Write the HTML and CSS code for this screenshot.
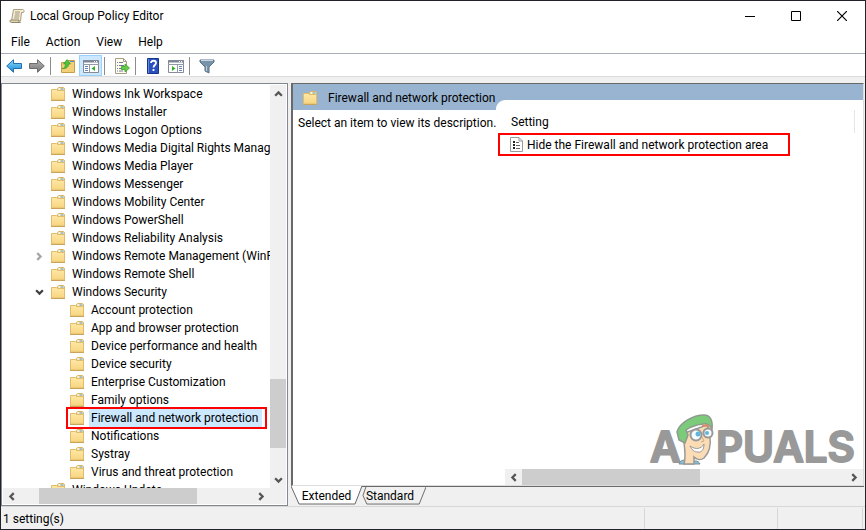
FILE: index.html
```
<!DOCTYPE html>
<html lang="en">
<head>
    <meta charset="UTF-8">
    <meta name="viewport" content="width=device-width, initial-scale=1.0">
    <title>Local Group Policy Editor</title>
    <link rel="stylesheet" href="styles.css">
</head>
<body>
    <!-- Shared icons -->
    <svg class="sprite" aria-hidden="true">
        <defs>
            <linearGradient id="folder-fill" x1="0" y1="0" x2="0" y2="1">
                <stop offset="0" stop-color="#ffe8a6"/>
                <stop offset="1" stop-color="#f6d580"/>
            </linearGradient>
            <linearGradient id="blue-fill" x1="0" y1="0" x2="0" y2="1">
                <stop offset="0" stop-color="#8bdcf8"/>
                <stop offset="1" stop-color="#1188d8"/>
            </linearGradient>
            <linearGradient id="grey-fill" x1="0" y1="0" x2="0" y2="1">
                <stop offset="0" stop-color="#b5b5b5"/>
                <stop offset="1" stop-color="#757575"/>
            </linearGradient>
        </defs>
        <symbol id="folder" viewBox="0 0 14 14">
            <path d="M6.500 5V1.500L7.500.5h5l1 1V5z" fill="#f7e3ad" stroke="#d9b566"/>
            <path d="M8 2h1.500" stroke="#fff"/>
            <path d="M9.500 2h3" stroke="#5aa0da"/>
            <path d="M.5 2.500h5l1 1h7v9.500H.5z" fill="url(#folder-fill)" stroke="#e0bd6c"/>
            <path d="M0 13.500h14" stroke="#c9a55c"/>
        </symbol>
        <symbol id="arrow-left" viewBox="0 0 8 8">
            <path d="M6 1L3 4l3 3" fill="none" stroke="currentColor" stroke-width="2"/>
        </symbol>
        <symbol id="arrow-right" viewBox="0 0 8 8">
            <path d="M2 1l3 3-3 3" fill="none" stroke="currentColor" stroke-width="2"/>
        </symbol>
        <symbol id="arrow-up" viewBox="0 0 8 8">
            <path d="M1 6l3-3 3 3" fill="none" stroke="currentColor" stroke-width="2"/>
        </symbol>
        <symbol id="arrow-down" viewBox="0 0 8 8">
            <path d="M1 2l3 3 3-3" fill="none" stroke="currentColor" stroke-width="2"/>
        </symbol>
    </svg>

    <div class="window">
        <!-- Title bar -->
        <header class="title-bar">
            <svg class="app-icon" viewBox="0 0 16 16">
                <path d="M4.500 1.500h9c2 0 2 3 .5 3h-1.500l-1 8.500H2.500z" fill="#f6ecd0" stroke="#a69c80"/>
                <path d="M1.500 12h8.500c-.5 1.500 0 2.500 1.500 2.500h-9c-1.500 0-2-1.500-1-2.500z" fill="#e2d4ac" stroke="#8f866c"/>
                <path d="M6 4h5M6 6h4.500M5.500 8h5M5 10h5" stroke="#9c9480"/>
            </svg>
            <h1>Local Group Policy Editor</h1>
            <div class="window-buttons">
                <button aria-label="Minimize"><svg viewBox="0 0 10 10"><path d="M0 5.500h10" stroke="#000"/></svg></button>
                <button aria-label="Maximize"><svg viewBox="0 0 10 10"><path d="M.5.5h9v9h-9z" fill="none" stroke="#000"/></svg></button>
                <button aria-label="Close"><svg viewBox="0 0 10 10"><path d="M0 0l10 10M10 0L0 10" stroke="#000" stroke-width="1.200"/></svg></button>
            </div>
        </header>

        <!-- Menu -->
        <nav class="menu-bar">
            <button>File</button>
            <button>Action</button>
            <button>View</button>
            <button>Help</button>
        </nav>

        <!-- Toolbar -->
        <div class="toolbar">
            <button aria-label="Back"><svg viewBox="0 0 16 16"><path d="M.7 8L7.500 1.700v3.800h8v5h-8v3.800z" fill="url(#blue-fill)" stroke="#236fae"/></svg></button>
            <button aria-label="Forward"><svg viewBox="0 0 16 16"><path d="M15.300 8L8.500 1.700v3.800h-8v5h8v3.800z" fill="url(#grey-fill)" stroke="#6d6d6d"/></svg></button>
            <span class="separator"></span>
            <button aria-label="Up one level"><svg viewBox="0 0 16 16">
                <path d="M1.500 4.500h5l1.500-2h6.500v12h-13z" fill="#f3cf78" stroke="#c79d48"/>
                <path d="M10 3.500h4" stroke="#4b91cc"/>
                <path d="M2 10.500c2.500 0 3.500-2 3.500-4.500H3.500L7 1.500 10.500 6h-2c0 3-2 5-6.500 4.500z" fill="#4cc43a" stroke="#278e23" stroke-width=".6"/>
            </svg></button>
            <button class="active" aria-label="Show/Hide Console Tree"><svg viewBox="0 0 16 16">
                <path d="M.5 2.500h15v12H.5z" fill="#fff" stroke="#858b96"/>
                <path d="M0 3.500h16" stroke="#7d8796" stroke-width="2"/>
                <path d="M0 6.500h16M6.500 7v8" stroke="#959ba5"/>
                <path d="M2 8.500h3M2 10.500h3M2 12.500h3" stroke="#6686ad"/>
                <path d="M12 8v5L8.500 10.500z" fill="#35ad26"/>
                <path d="M11 3.500h1M13 3.500h1" stroke="#fff"/>
            </svg></button>
            <span class="separator"></span>
            <button aria-label="Export List"><svg viewBox="0 0 16 16">
                <path d="M1.500.5h8l3 3v12h-11z" fill="#fffdf2" stroke="#a69e85"/>
                <path d="M9.500.5v3h3" fill="none" stroke="#a69e85"/>
                <path d="M3 4.500h1M5 4.500h4M3 7.500h1M5 7.500h5M3 10.500h1M5 10.500h3M3 13h1M5 13h4" stroke="#6f7896"/>
                <path d="M7.500 8.500h3.500V6l4.500 4-4.500 4v-2.500H7.500z" fill="#65cc46" stroke="#3b9d2c" stroke-width=".8"/>
            </svg></button>
            <span class="separator"></span>
            <button aria-label="Help"><svg viewBox="0 0 16 16">
                <path d="M2.500.5h11v15h-11z" fill="#2950bd" stroke="#18358c"/>
                <path d="M3.500 1v14" stroke="#6688df"/>
                <path d="M6 5c0-3 5-3 5 0 0 2-2.500 2-2.500 4.500M8.500 11v2" fill="none" stroke="#fff" stroke-width="1.800"/>
            </svg></button>
            <button aria-label="Show/Hide Action Pane"><svg viewBox="0 0 16 16">
                <path d="M.5 2.500h15v12H.5z" fill="#fff" stroke="#858b96"/>
                <path d="M0 3.500h16" stroke="#7d8796" stroke-width="2"/>
                <path d="M0 6.500h16M9.500 7v8" stroke="#959ba5"/>
                <path d="M11 8.500h3M11 10.500h3M11 12.500h3" stroke="#6686ad"/>
                <path d="M4 8v5l3.500-2.500z" fill="#35ad26"/>
                <path d="M11 3.500h1M13 3.500h1" stroke="#fff"/>
            </svg></button>
            <span class="separator"></span>
            <button aria-label="Filter"><svg viewBox="0 0 16 16">
                <path d="M1 2h14v2L10 9v6l-4-2V9L1 4z" fill="#7893a8" stroke="#58718a"/>
                <path d="M2 2.500h12" stroke="#c9d9e3"/>
                <path d="M7.500 8v5" stroke="#bdd0dc"/>
            </svg></button>
        </div>

        <main class="panes">
            <!-- Console tree -->
            <section class="tree-pane">
                <div class="tree-row">
                    <ul class="tree">
                        <li><svg class="folder"><use href="#folder"/></svg><span>Windows Ink Workspace</span></li>
                        <li><svg class="folder"><use href="#folder"/></svg><span>Windows Installer</span></li>
                        <li><svg class="folder"><use href="#folder"/></svg><span>Windows Logon Options</span></li>
                        <li><svg class="folder"><use href="#folder"/></svg><span>Windows Media Digital Rights Management</span></li>
                        <li><svg class="folder"><use href="#folder"/></svg><span>Windows Media Player</span></li>
                        <li><svg class="folder"><use href="#folder"/></svg><span>Windows Messenger</span></li>
                        <li><svg class="folder"><use href="#folder"/></svg><span>Windows Mobility Center</span></li>
                        <li><svg class="folder"><use href="#folder"/></svg><span>Windows PowerShell</span></li>
                        <li><svg class="folder"><use href="#folder"/></svg><span>Windows Reliability Analysis</span></li>
                        <li class="parent"><button class="closed" aria-label="Expand"><svg><use href="#arrow-right"/></svg></button><svg class="folder"><use href="#folder"/></svg><span>Windows Remote Management (WinRM)</span></li>
                        <li><svg class="folder"><use href="#folder"/></svg><span>Windows Remote Shell</span></li>
                        <li class="parent"><button aria-label="Collapse"><svg><use href="#arrow-down"/></svg></button><svg class="folder"><use href="#folder"/></svg><span>Windows Security</span></li>
                        <li class="child"><svg class="folder"><use href="#folder"/></svg><span>Account protection</span></li>
                        <li class="child"><svg class="folder"><use href="#folder"/></svg><span>App and browser protection</span></li>
                        <li class="child"><svg class="folder"><use href="#folder"/></svg><span>Device performance and health</span></li>
                        <li class="child"><svg class="folder"><use href="#folder"/></svg><span>Device security</span></li>
                        <li class="child"><svg class="folder"><use href="#folder"/></svg><span>Enterprise Customization</span></li>
                        <li class="child"><svg class="folder"><use href="#folder"/></svg><span>Family options</span></li>
                        <li class="child selected"><svg class="folder"><use href="#folder"/></svg><span>Firewall and network protection</span></li>
                        <li class="child"><svg class="folder"><use href="#folder"/></svg><span>Notifications</span></li>
                        <li class="child"><svg class="folder"><use href="#folder"/></svg><span>Systray</span></li>
                        <li class="child"><svg class="folder"><use href="#folder"/></svg><span>Virus and threat protection</span></li>
                        <li><svg class="folder"><use href="#folder"/></svg><span>Windows Update</span></li>
                    </ul>
                    <div class="scrollbar vertical">
                        <button aria-label="Scroll up"><svg><use href="#arrow-up"/></svg></button>
                        <div class="track tree-v"><div class="thumb"></div></div>
                        <button aria-label="Scroll down"><svg><use href="#arrow-down"/></svg></button>
                    </div>
                </div>
                <div class="scrollbar horizontal tree-scroll">
                    <button aria-label="Scroll left"><svg><use href="#arrow-left"/></svg></button>
                    <div class="track tree-h"><div class="thumb"></div></div>
                    <button aria-label="Scroll right"><svg><use href="#arrow-right"/></svg></button>
                </div>
            </section>

            <!-- Settings -->
            <section class="detail-pane">
                <div class="detail-view">
                    <div class="detail-title">
                        <svg class="folder"><use href="#folder"/></svg>
                        <h2>Firewall and network protection</h2>
                    </div>
                    <div class="detail-body">
                        <p class="description">Select an item to view its description.</p>
                        <div class="list">
                            <table>
                                <thead><tr><th>Setting</th></tr></thead>
                                <tbody>
                                    <tr><td><div class="setting">
                                        <svg viewBox="0 0 13 15">
                                            <path d="M.5.5h8.500l3.500 3.500v10.500H.5z" fill="#fff" stroke="#9a9a9a"/>
                                            <path d="M9 .5V4h3.500" fill="none" stroke="#9a9a9a"/>
                                            <path d="M3 5h2M3 8h2M3 11h2" stroke="#222" stroke-width="2"/>
                                            <path d="M6 5.500h3M6 8.500h4M6 11.500h4" stroke="#666"/>
                                        </svg>
                                        <span>Hide the Firewall and network protection area</span>
                                    </div></td></tr>
                                </tbody>
                            </table>
                            <div class="scrollbar horizontal">
                                <button aria-label="Scroll left"><svg><use href="#arrow-left"/></svg></button>
                                <div class="track list-h"><div class="thumb"></div></div>
                                <button aria-label="Scroll right"><svg><use href="#arrow-right"/></svg></button>
                            </div>
                        </div>
                    </div>
                    <svg class="watermark" viewBox="0 0 210 52" role="img" aria-label="Appuals">
                        <g class="letters">
                            <text x="1" y="49">A</text>
                            <text x="67" y="49">PUALS</text>
                        </g>
                        <path d="M30 51c1-3 3-4 6-4l10 1c3 0 4 1 5 3z" fill="#79c7e4" stroke="#888"/>
                        <path d="M35 30l-2-9 25-9 3 12c1 8-1 16-6 21-4 3-8 1-10-1v7h-10c2-7 1-14 0-21z" fill="#fbdcb4" stroke="#999" stroke-width="1.500"/>
                        <path d="M28 19c2-9 16-17 27-17 6 0 9 5 8 14-2-4-5-6-9-5-8 1-13 3-17 6l2 5-3 8-6-3z" fill="#7ccb7b" stroke="#8f9a8f" stroke-width="1.500"/>
                        <path d="M53 13l5-1 2 3" fill="none" stroke="#d88b62" stroke-width="2"/>
                        <circle cx="47" cy="22" r="5.500" fill="#f5fcff" stroke="#999" stroke-width="2"/>
                        <circle cx="59" cy="20" r="4.500" fill="#f5fcff" stroke="#999" stroke-width="2"/>
                        <circle cx="49" cy="21" r="2.500" fill="#62b5da"/>
                        <circle cx="58" cy="20" r="2" fill="#62b5da"/>
                        <path d="M41 33c6 4 11 3 14-2 0 6-3 9-6 8-4 0-6-2-8-6z" fill="#fff" stroke="#999"/>
                        <path d="M53 24l2 4-3 1" fill="none" stroke="#c6a988"/>
                    </svg>
                </div>
                <div class="tabs">
                    <button class="tab current"><svg viewBox="0 0 71 19" preserveAspectRatio="none"><path d="M0 0l8 18h56l7-18" fill="#fff" stroke="#696969"/></svg><span>Extended</span></button>
                    <button class="tab"><svg viewBox="0 0 66 19" preserveAspectRatio="none"><path d="M4 0L1 9l4 9h54l7-18" fill="#f0f0f0" stroke="#696969"/></svg><span>Standard</span></button>
                    <div class="tab-line"></div>
                </div>
            </section>
        </main>

        <!-- Status bar -->
        <footer class="status-bar">
            <div class="status-text">1 setting(s)</div>
            <div class="status-cell wide"></div>
            <div class="status-cell"></div>
        </footer>
    </div>
</body>
</html>
```
FILE: styles.css
```
* {
    margin: 0;
    padding: 0;
    box-sizing: border-box;
}

body {
    background: #f0f0f0;
    color: #000;
    font-family: Roboto, "Open Sans", sans-serif;
    font-size: 12px;
    line-height: 18px;
}

button {
    border: none;
    background: none;
    color: inherit;
    font: inherit;
}

svg {
    display: block;
    flex: none;
}

.sprite {
    position: absolute;
    width: 0;
    height: 0;
}

.window {
    display: flex;
    flex-direction: column;
    height: 100vh;
    border: 1px solid #22222c;
    background: #f0f0f0;
}

/* Title bar */
.title-bar {
    display: flex;
    align-items: center;
    height: 30px;
    padding-left: 8px;
    background: #fff;
}

.app-icon {
    width: 16px;
    height: 16px;
    margin-right: 5px;
}

.title-bar h1 {
    flex: 1;
    font-size: 12px;
    font-weight: normal;
}

.window-buttons {
    display: flex;
}

.window-buttons button {
    display: flex;
    align-items: center;
    justify-content: center;
    width: 46px;
    height: 29px;
}

.window-buttons svg {
    width: 10px;
    height: 10px;
}

/* Menu and toolbar */
.menu-bar {
    display: flex;
    height: 23px;
    padding: 0 2px;
    border-bottom: 1px solid #a9adb8;
    background: #fff;
}

.menu-bar button {
    padding: 0 8px;
}

.toolbar {
    display: flex;
    align-items: flex-end;
    height: 23px;
    padding-left: 1px;
    border-bottom: 1px solid #dcdcdc;
    background: #fff;
}

.toolbar button {
    display: flex;
    align-items: center;
    justify-content: center;
    width: 23px;
    height: 21px;
}

.toolbar svg {
    width: 16px;
    height: 16px;
}

.toolbar .active {
    border: 1px solid #99d1ff;
    background: #cce8ff;
}

.separator {
    width: 1px;
    height: 18px;
    margin: 0 5px 1px 2px;
    background: #8c8c8c;
}

/* Panes */
.panes {
    display: flex;
    flex: 1;
    gap: 3px;
    min-height: 0;
    padding: 6px 1px 0 0;
}

.tree-pane {
    display: flex;
    flex-direction: column;
    flex: 0 0 287px;
    min-width: 0;
    padding: 1px;
    border: 1px solid #828790;
    background: #fff;
}

.tree-row {
    display: flex;
    flex: 1;
    min-height: 0;
}

.tree {
    flex: 1;
    min-width: 0;
    overflow: hidden;
    list-style: none;
}

.tree li {
    display: flex;
    align-items: center;
    height: 18px;
    padding-left: 48px;
    white-space: nowrap;
}

.tree .child {
    padding-left: 67px;
}

.tree .parent {
    padding-left: 32px;
}

.tree li span {
    padding: 0 4px 0 2px;
}

.tree button {
    flex: none;
    width: 16px;
    color: #404040;
}

.tree button svg {
    width: 9px;
    height: 9px;
}

.tree .closed {
    color: #a6a6a6;
}

.folder {
    width: 14px;
    height: 14px;
    margin-right: 5px;
}

.tree .selected {
    position: relative;
}

.selected span {
    background: #cce8ff;
}

.selected::after {
    content: "";
    position: absolute;
    inset: -2px 3px -2px 63px;
    border: 2px solid #f00;
}

/* Scrollbars */
.scrollbar {
    display: flex;
    background: #f0f0f0;
    color: #555;
}

.scrollbar button {
    display: flex;
    align-items: center;
    justify-content: center;
    width: 17px;
    height: 16px;
}

.scrollbar button svg {
    width: 9px;
    height: 9px;
}

.vertical {
    flex-direction: column;
    width: 16px;
}

.track {
    display: flex;
    flex: 1;
}

.thumb {
    background: #cdcdcd;
}

.tree-v {
    flex-direction: column;
    justify-content: flex-end;
    padding-bottom: 24px;
}

.tree-v .thumb {
    height: 20%;
}

.tree-scroll {
    padding-right: 16px;
}

.tree-h {
    padding-left: 19px;
}

.tree-h .thumb {
    width: 74%;
}

.list-h .thumb {
    width: 55%;
}

/* Detail pane */
.detail-pane {
    display: flex;
    flex: 1;
    flex-direction: column;
    min-width: 0;
}

.detail-view {
    position: relative;
    display: flex;
    flex: 1;
    flex-direction: column;
    min-height: 0;
    border: 1px solid #dcdcdc;
    border-top: 1px solid #696969;
    border-left: 2px solid #696969;
    background: #fff;
}

.detail-title {
    display: flex;
    align-items: center;
    height: 26px;
    padding: 2px 10px 0;
    background: #99b4d1;
}

.detail-title h2 {
    margin-left: 6px;
    font-size: 12px;
    font-weight: normal;
}

.detail-body {
    display: flex;
    flex: 1;
    gap: 3px;
}

.description {
    flex: 0 0 200px;
    min-width: 0;
    padding: 4px 0 0 5px;
    white-space: nowrap;
}

/* The list reaches up over the blue title strip */
.list {
    display: flex;
    flex: 1;
    flex-direction: column;
    justify-content: space-between;
    margin-top: -10px;
    border-top-left-radius: 9px;
    background: #fff;
}

.list table {
    width: 100%;
    border-collapse: collapse;
}

.list th {
    height: 33px;
    padding: 10px 0 0 15px;
    background: linear-gradient(#e5e5e5, #e5e5e5) right 8px bottom 0 / 1px 23px no-repeat;
    font-weight: normal;
    text-align: left;
}

.setting {
    display: flex;
    align-items: center;
    gap: 4px;
    width: 292px;
    height: 23px;
    margin-left: 2px;
    padding-left: 10px;
    border: 2px solid #f00;
    white-space: nowrap;
}

.setting svg {
    width: 13px;
    height: 15px;
}

.list .scrollbar {
    margin-left: 9px;
}

.watermark {
    position: absolute;
    right: 4px;
    bottom: 20px;
    width: 210px;
    height: 52px;
    overflow: visible;
}

.letters {
    fill: #999;
    stroke: #999;
    stroke-width: 2px;
    stroke-linejoin: round;
    font-family: Inter, sans-serif;
    font-size: 42px;
    font-weight: 600;
}

/* Tabs */
.tabs {
    display: flex;
    height: 20px;
}

.tab {
    position: relative;
    width: 71px;
    height: 19px;
}

.tab svg {
    position: absolute;
    inset: 0;
    width: 100%;
    height: 100%;
}

.tab span {
    position: relative;
}

.tab + .tab {
    width: 64px;
    padding-right: 8px;
    border-top: 1px solid #696969;
}

.tab-line {
    flex: 1;
    border-top: 1px solid #696969;
}

/* Status bar */
.status-bar {
    display: flex;
    height: 23px;
    padding: 1px 2px 0 0;
    border-top: 1px solid #d7d7d7;
}

.status-text {
    flex: 1;
    padding: 2px;
}

.status-cell {
    width: 85px;
    border: solid #d7d7d7;
    border-width: 0 1px 0 0;
}

.status-cell.wide {
    width: 134px;
    border-left-width: 1px;
}
```
